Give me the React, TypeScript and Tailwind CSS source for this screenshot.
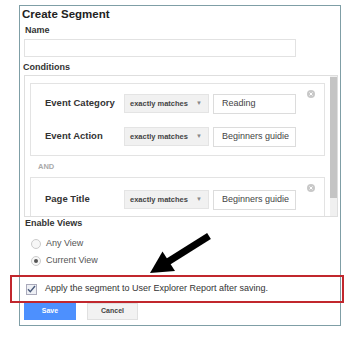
import React from "react";

const CloseDot = () => (
  <span className="absolute right-[9px] top-[6px] flex h-[8px] w-[8px] items-center justify-center rounded-full bg-[#c8c8c8]">
    <svg width="4" height="4" viewBox="0 0 4 4" stroke="#fff" strokeWidth="1">
      <path d="M0.5 0.5l3 3M3.5 0.5l-3 3" />
    </svg>
  </span>
);

const Row = ({ label, value }: { label: string; value: string }) => (
  <div className="flex h-[19px] shrink-0 items-center">
    <div className="w-[79px] text-[9.5px] font-bold text-[#333]">{label}</div>
    <div className="flex h-[19px] w-[85px] items-center justify-between border border-[#e4e4e4] bg-[#f1f1f1] pl-[5px] pr-[6px]">
      <span className="text-[7.5px] font-bold text-[#444]">exactly matches</span>
      <span className="text-[6px] text-[#888]">▼</span>
    </div>
    <div className="ml-[4px] flex h-[20px] w-[83px] items-center overflow-hidden whitespace-nowrap border border-[#dcdcdc] bg-white pl-[8px] text-[9px] text-[#444]">
      {value}
    </div>
  </div>
);

export default function App() {
  return (
    <div className="relative h-[337px] w-[349px] overflow-hidden bg-white font-['Liberation_Sans',Arial,sans-serif]">
      <div className="ml-[19px] mt-[5px] flex h-[321px] w-[322px] flex-col border border-[#7f9ea6] bg-white">
        <div className="flex h-[17px] shrink-0 items-center pl-[2px] text-[11.5px] font-bold text-[#222]">Create Segment</div>
        <div className="flex h-[16px] shrink-0 items-center pl-[5px] text-[9px] font-bold text-[#333]">Name</div>
        <div className="ml-[4px] h-[18px] w-[272px] shrink-0 border border-[#e2e2e2]" />
        <div className="flex h-[18px] shrink-0 items-center pl-[3px] pt-[3px] text-[9px] font-bold text-[#333]">Conditions</div>
        <div className="ml-[4px] flex h-[142px] w-[314px] shrink-0 overflow-hidden border border-[#dedede]">
          <div className="flex w-[305px] flex-col pl-[5px] pt-[7px]">
            <div className="relative flex h-[73px] w-[295px] shrink-0 flex-col gap-[14px] border border-[#e3e3e3] pl-[14px] pt-[10px]">
              <Row label="Event Category" value="Reading" />
              <Row label="Event Action" value="Beginners guidie" />
              <CloseDot />
            </div>
            <div className="flex h-[21px] shrink-0 items-center pl-[8px] text-[7.5px] font-bold text-[#aaa]">AND</div>
            <div className="relative flex h-[60px] w-[295px] shrink-0 flex-col border border-[#e3e3e3] pl-[14px] pt-[12px]">
              <Row label="Page Title" value="Beginners guidie" />
              <CloseDot />
            </div>
          </div>
          <div className="ml-[5px] flex w-[7px] flex-col bg-[#f0f0f0] pt-[1px]">
            <div className="h-[121px] w-[7px] bg-[#c4c4c4]" />
          </div>
        </div>
        <div className="flex h-[14px] shrink-0 items-center pl-[5px] text-[9px] font-bold text-[#333]">Enable Views</div>
        <div className="mt-[4px] flex h-[17px] shrink-0 items-center pl-[11px] text-[9px] text-[#555]">
          <span className="mr-[5px] h-[10px] w-[10px] rounded-full border border-[#ccc] bg-[#f7f7f7]" />
          Any View
        </div>
        <div className="flex h-[17px] shrink-0 items-center pl-[11px] text-[9px] text-[#555]">
          <span className="mr-[5px] flex h-[10px] w-[10px] items-center justify-center rounded-full border border-[#ccc] bg-[#f7f7f7]">
            <span className="h-[4px] w-[4px] rounded-full bg-[#555]" />
          </span>
          Current View
        </div>
        <div className="mt-[11px] flex h-[18px] shrink-0 items-center pl-[6px] text-[9px] text-[#333]">
          <span className="mr-[8px] flex h-[11px] w-[11px] items-center justify-center border border-[#aab] bg-[#eef0f5]">
            <svg width="9" height="8" viewBox="0 0 9 8" fill="none" stroke="#4a5a7a" strokeWidth="1.4">
              <path d="M1 4.2l2.3 2.5L8 1" />
            </svg>
          </span>
          Apply the segment to User Explorer Report after saving.
        </div>
        <div className="ml-[4px] mt-[5px] flex h-[17px] shrink-0 gap-[11px]">
          <div className="flex w-[52px] items-center justify-center bg-[#4d90fe] text-[7px] font-bold text-white">Save</div>
          <div className="flex w-[51px] items-center justify-center border border-[#e0e0e0] bg-[#f2f2f2] text-[7px] font-bold text-[#444]">Cancel</div>
        </div>
      </div>
      <div className="pointer-events-none absolute left-[10px] top-[275px] h-[28px] w-[334px] border-2 border-[#c1272d]" />
      <svg className="pointer-events-none absolute left-0 top-0" width="349" height="337" viewBox="0 0 349 337">
        <line x1="209" y1="236" x2="166" y2="263" stroke="#000" strokeWidth="7" />
        <polygon points="150,273 162.5,251.5 175,271" fill="#000" />
      </svg>
    </div>
  );
}
